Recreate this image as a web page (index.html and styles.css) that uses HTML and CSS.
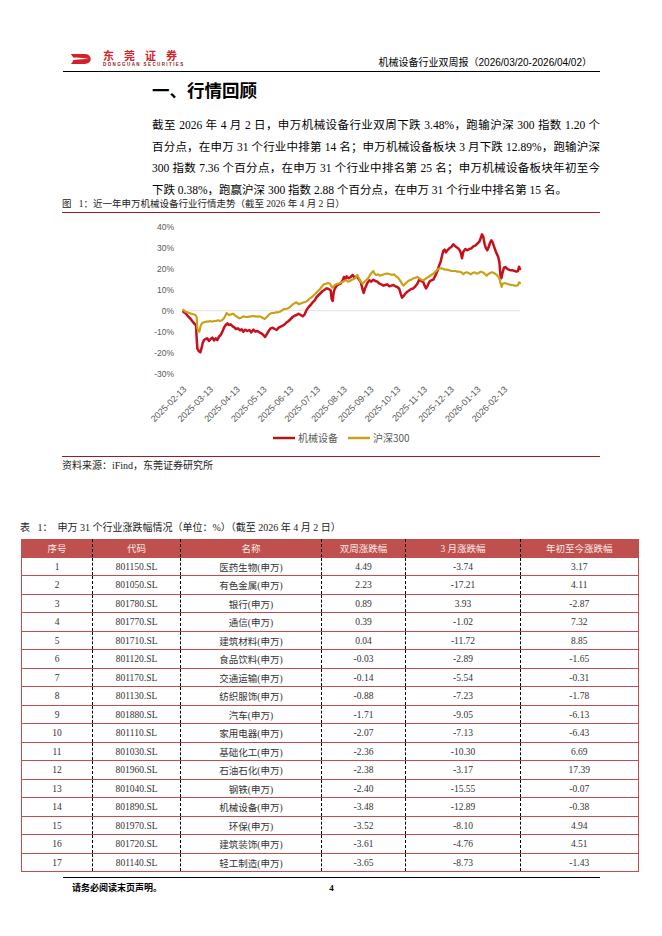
FILE: index.html
```html
<!DOCTYPE html>
<html lang="zh-CN">
<head>
<meta charset="utf-8">
<title>机械设备行业双周报</title>
<link rel="stylesheet" href="styles.css">
</head>
<body>
<div class="page">
  <header class="hdr">
    <div class="logo">
      <svg class="logo-mark" viewBox="0 0 26 13">
        <path d="M1 1 H16 A6.5 5.5 0 0 1 16 12 H1 Q6 6.5 1 1Z" fill="#d42027"/>
        <path d="M0 5.2 Q11 4.2 21 6.6 Q11 6.2 0 8.2Z" fill="#fff"/>
      </svg>
      <div class="logo-words">
        <div class="logo-cn">东莞证券</div>
        <div class="logo-en">DONGGUAN SECURITIES</div>
      </div>
    </div>
    <div class="hdr-title">机械设备行业双周报（2026/03/20-2026/04/02）</div>
  </header>

  <h1 class="sec-title">一、行情回顾</h1>

  <p class="para">
    <span class="ln">截至 2026 年 4 月 2 日，申万机械设备行业双周下跌 3.48%，跑输沪深 300 指数 1.20 个</span>
    <span class="ln">百分点，在申万 31 个行业中排第 14 名；申万机械设备板块 3 月下跌 12.89%，跑输沪深</span>
    <span class="ln">300 指数 7.36 个百分点，在申万 31 个行业中排名第 25 名；申万机械设备板块年初至今</span>
    <span class="ln-last">下跌 0.38%，跑赢沪深 300 指数 2.88 个百分点，在申万 31 个行业中排名第 15 名。</span>
  </p>

  <div class="fig-cap">图&nbsp;&nbsp;&nbsp;1：近一年申万机械设备行业行情走势（截至 2026 年 4 月 2 日）</div>

  <svg class="chart" viewBox="62 213 538 243">
    <line class="zero" x1="183" y1="310.7" x2="520" y2="310.7"/>
    <text class="ylab" x="174" y="229.7">40%</text>
    <text class="ylab" x="174" y="250.7">30%</text>
    <text class="ylab" x="174" y="271.7">20%</text>
    <text class="ylab" x="174" y="292.7">10%</text>
    <text class="ylab" x="174" y="313.7">0%</text>
    <text class="ylab" x="174" y="334.7">-10%</text>
    <text class="ylab" x="174" y="355.7">-20%</text>
    <text class="ylab" x="174" y="376.7">-30%</text>
    <g transform="translate(140 215) scale(0.33333)">
      <polyline class="s-red" points="130,290 138,296 145,305 152,312 158,320 163,326 168,330 170,370 172,400 176,408 181,412 185,398 188,385 192,375 197,372 202,370 207,378 212,372 217,368 222,376 227,370 232,375 237,365 242,360 247,350 252,338 257,330 262,325 266,330 272,328 278,334 283,337 288,342 294,340 300,346 305,343 310,350 316,344 322,348 328,345 334,352 340,344 346,350 352,348 358,352 364,355 370,360 375,366 380,358 386,348 392,340 398,338 404,342 410,345 416,338 422,335 428,332 434,328 440,322 446,318 452,312 458,306 464,302 470,300 476,296 482,300 488,304 494,298 500,284 506,276 512,270 518,262 524,256 530,246 536,240 542,234 548,228 554,224 560,220 566,222 572,226 575,252 578,258 581,232 584,222 590,212 596,208 602,206 608,196 612,186 616,192 620,184 626,190 632,186 638,180 644,188 650,184 656,192 662,200 668,224 671,234 676,218 682,204 688,196 694,200 700,194 706,198 712,200 718,206 724,208 730,212 736,210 742,208 748,214 754,212 760,210 766,214 772,216 778,222 782,236 786,248 790,244 796,236 802,230 808,226 814,222 820,220 826,214 832,206 838,194 844,198 850,202 854,212 858,220 862,214 868,200 874,196 880,194 886,182 892,168 898,150 902,140 906,122 910,108 914,104 918,112 922,106 928,100 934,96 940,88 946,94 952,98 958,104 962,112 966,130 970,110 976,102 982,106 988,102 994,100 1000,94 1006,92 1012,86 1018,80 1022,70 1026,58 1030,66 1034,88 1038,100 1042,106 1046,96 1050,84 1054,76 1058,82 1062,94 1066,106 1070,116 1074,124 1078,140 1081,178 1084,190 1088,172 1092,158 1096,156 1100,160 1106,164 1112,166 1118,166 1124,168 1130,170 1134,168 1137,155 1140,162"/>
      <polyline class="s-gold" points="130,284 136,290 142,292 148,294 154,296 160,298 166,300 170,306 172,340 175,348 178,350 182,332 186,325 192,322 198,320 204,320 210,318 216,320 222,318 228,318 234,316 240,318 246,316 252,310 256,302 260,294 264,298 268,300 274,298 280,296 286,302 292,306 298,310 304,308 310,304 316,306 322,306 328,305 334,304 340,303 346,304 352,305 358,304 364,306 370,310 374,312 378,308 384,302 390,296 396,294 402,294 408,292 414,292 420,290 426,286 432,282 438,282 444,280 450,276 456,270 462,266 468,262 472,264 476,268 480,266 486,264 492,262 498,260 504,256 510,250 516,246 522,240 528,234 534,228 540,222 546,214 552,208 558,206 564,204 570,206 574,214 578,218 582,212 588,208 594,206 600,204 606,202 612,198 618,196 624,200 630,198 636,194 642,192 648,186 652,180 656,188 660,196 664,202 668,206 672,202 678,196 684,190 690,180 696,172 700,168 704,176 708,180 714,178 720,182 726,180 732,178 738,176 744,176 750,178 756,180 762,178 768,184 774,188 780,196 786,206 790,212 796,206 802,200 808,196 814,194 820,190 826,188 832,186 838,190 844,194 850,196 856,192 862,188 868,184 874,180 880,176 886,170 892,164 898,160 904,160 910,162 916,164 922,164 928,166 934,168 940,168 946,168 952,170 958,170 964,172 970,178 974,174 980,172 986,174 992,178 998,174 1004,172 1010,176 1016,174 1022,170 1028,172 1034,176 1040,182 1044,178 1050,174 1056,172 1062,174 1068,178 1074,184 1078,190 1082,206 1085,216 1088,206 1094,204 1100,206 1106,208 1112,210 1118,210 1124,212 1130,212 1134,210 1137,202 1140,204"/>
    </g>
    <text class="xlab" transform="translate(187 390) rotate(-45)">2025-02-13</text>
    <text class="xlab" transform="translate(213.75 390) rotate(-45)">2025-03-13</text>
    <text class="xlab" transform="translate(240.5 390) rotate(-45)">2025-04-13</text>
    <text class="xlab" transform="translate(267.25 390) rotate(-45)">2025-05-13</text>
    <text class="xlab" transform="translate(294 390) rotate(-45)">2025-06-13</text>
    <text class="xlab" transform="translate(320.75 390) rotate(-45)">2025-07-13</text>
    <text class="xlab" transform="translate(347.5 390) rotate(-45)">2025-08-13</text>
    <text class="xlab" transform="translate(374.25 390) rotate(-45)">2025-09-13</text>
    <text class="xlab" transform="translate(401 390) rotate(-45)">2025-10-13</text>
    <text class="xlab" transform="translate(427.75 390) rotate(-45)">2025-11-13</text>
    <text class="xlab" transform="translate(454.5 390) rotate(-45)">2025-12-13</text>
    <text class="xlab" transform="translate(481.25 390) rotate(-45)">2026-01-13</text>
    <text class="xlab" transform="translate(508 390) rotate(-45)">2026-02-13</text>
    <line class="lg-red" x1="273" y1="438" x2="295" y2="438"/>
    <text class="lg" x="298" y="441.5">机械设备</text>
    <line class="lg-gold" x1="348" y1="438" x2="370" y2="438"/>
    <text class="lg" x="373" y="441.5">沪深300</text>
  </svg>

  <div class="src">资料来源：iFind，东莞证券研究所</div>

  <div class="tbl-cap">表&nbsp;&nbsp;&nbsp;1：&nbsp;&nbsp;申万 31 个行业涨跌幅情况（单位：%）（截至 2026 年 4 月 2 日）</div>

  <table class="tbl">
    <colgroup>
      <col class="c1"><col class="c2"><col class="c3"><col class="c4"><col class="c5"><col class="c6">
    </colgroup>
    <thead>
      <tr><th>序号</th><th>代码</th><th>名称</th><th>双周涨跌幅</th><th>3 月涨跌幅</th><th>年初至今涨跌幅</th></tr>
    </thead>
    <tbody>
      <tr><td>1</td><td>801150.SL</td><td>医药生物(申万)</td><td>4.49</td><td>-3.74</td><td>3.17</td></tr>
      <tr><td>2</td><td>801050.SL</td><td>有色金属(申万)</td><td>2.23</td><td>-17.21</td><td>4.11</td></tr>
      <tr><td>3</td><td>801780.SL</td><td>银行(申万)</td><td>0.89</td><td>3.93</td><td>-2.87</td></tr>
      <tr><td>4</td><td>801770.SL</td><td>通信(申万)</td><td>0.39</td><td>-1.02</td><td>7.32</td></tr>
      <tr><td>5</td><td>801710.SL</td><td>建筑材料(申万)</td><td>0.04</td><td>-11.72</td><td>8.85</td></tr>
      <tr><td>6</td><td>801120.SL</td><td>食品饮料(申万)</td><td>-0.03</td><td>-2.89</td><td>-1.65</td></tr>
      <tr><td>7</td><td>801170.SL</td><td>交通运输(申万)</td><td>-0.14</td><td>-5.54</td><td>-0.31</td></tr>
      <tr><td>8</td><td>801130.SL</td><td>纺织服饰(申万)</td><td>-0.88</td><td>-7.23</td><td>-1.78</td></tr>
      <tr><td>9</td><td>801880.SL</td><td>汽车(申万)</td><td>-1.71</td><td>-9.05</td><td>-6.13</td></tr>
      <tr><td>10</td><td>801110.SL</td><td>家用电器(申万)</td><td>-2.07</td><td>-7.13</td><td>-6.43</td></tr>
      <tr><td>11</td><td>801030.SL</td><td>基础化工(申万)</td><td>-2.36</td><td>-10.30</td><td>6.69</td></tr>
      <tr><td>12</td><td>801960.SL</td><td>石油石化(申万)</td><td>-2.38</td><td>-3.17</td><td>17.39</td></tr>
      <tr><td>13</td><td>801040.SL</td><td>钢铁(申万)</td><td>-2.40</td><td>-15.55</td><td>-0.07</td></tr>
      <tr><td>14</td><td>801890.SL</td><td>机械设备(申万)</td><td>-3.48</td><td>-12.89</td><td>-0.38</td></tr>
      <tr><td>15</td><td>801970.SL</td><td>环保(申万)</td><td>-3.52</td><td>-8.10</td><td>4.94</td></tr>
      <tr><td>16</td><td>801720.SL</td><td>建筑装饰(申万)</td><td>-3.61</td><td>-4.76</td><td>4.51</td></tr>
      <tr><td>17</td><td>801140.SL</td><td>轻工制造(申万)</td><td>-3.65</td><td>-8.73</td><td>-1.43</td></tr>
    </tbody>
  </table>

  <footer class="ftr">
    <span class="ftr-note">请务必阅读末页声明。</span>
    <span class="pno">4</span>
    <span></span>
  </footer>
</div>
</body>
</html>
```

FILE: styles.css
```css
html, body {
  margin: 0;
  padding: 0;
  background: #fff;
}
body {
  font-family: "Liberation Serif", "Noto Sans CJK SC", serif;
  color: #000;
}
.page {
  width: 662px;
}

/* header */
.hdr {
  display: flex;
  justify-content: space-between;
  align-items: flex-end;
  margin: 0 62px 0 63px;
  padding-top: 48px;
  height: 23px;
  border-bottom: 1.5px solid #000;
}
.logo {
  display: flex;
  align-items: center;
  gap: 9px;
  padding-left: 7px;
  padding-bottom: 4px;
}
.logo-mark {
  width: 24px;
  height: 12px;
  display: block;
}
.logo-words {
  display: flex;
  flex-direction: column;
  gap: 1px;
}
.logo-cn {
  font-family: "Noto Sans CJK SC", sans-serif;
  font-weight: 700;
  font-size: 11px;
  line-height: 11px;
  letter-spacing: 10px;
  color: #d4232a;
}
.logo-en {
  font-family: "Liberation Sans", sans-serif;
  font-weight: 700;
  font-size: 4.5px;
  line-height: 5px;
  letter-spacing: 1.4px;
  color: #8a1a1a;
}
.hdr-title {
  font-family: "Liberation Sans", "Noto Sans CJK SC", sans-serif;
  font-size: 10px;
  line-height: 12px;
  padding-right: 8px;
  padding-bottom: 2px;
}

/* title + paragraph */
.sec-title {
  margin: 6px 0 0 152px;
  font-family: "Noto Sans CJK SC", sans-serif;
  font-size: 17.5px;
  line-height: 24px;
  font-weight: 700;
}
.para {
  margin: 13px 62px 0 152px;
  font-size: 11.5px;
  line-height: 21.7px;
}
.ln {
  display: block;
  white-space: nowrap;
  text-align: justify;
  text-align-last: justify;
}
.ln-last {
  display: block;
  white-space: nowrap;
}

/* figure */
.fig-cap {
  margin: -3px 62px 0 62px;
  font-size: 9.5px;
  line-height: 10px;
  padding-bottom: 3px;
  color: #222;
  border-bottom: 1.2px solid #9b1c1c;
}
.chart {
  display: block;
  margin-left: 62px;
  width: 538px;
  height: 243px;
}
.zero {
  stroke: #d9d9d9;
  stroke-width: 0.8;
}
.ylab {
  font-family: "Liberation Sans", sans-serif;
  font-size: 8.5px;
  fill: #595959;
  text-anchor: end;
}
.xlab {
  font-family: "Liberation Sans", sans-serif;
  font-size: 9px;
  fill: #595959;
  text-anchor: end;
}
.s-red {
  fill: none;
  stroke: #c8101c;
  stroke-width: 7.5;
  stroke-linejoin: round;
  stroke-linecap: round;
}
.s-gold {
  fill: none;
  stroke: #c9a016;
  stroke-width: 6.5;
  stroke-linejoin: round;
  stroke-linecap: round;
}
.lg-red {
  stroke: #b01818;
  stroke-width: 2.5;
}
.lg-gold {
  stroke: #c9a016;
  stroke-width: 2.5;
}
.lg {
  font-family: "Noto Sans CJK SC", sans-serif;
  font-size: 10px;
  fill: #595959;
}

.src {
  margin: 0 62px;
  border-top: 1.2px solid #9b1c1c;
  padding-top: 3px;
  font-size: 10px;
  line-height: 12px;
  color: #222;
}

/* table */
.tbl-cap {
  margin: 50px 0 0 20px;
  font-size: 10px;
  line-height: 12px;
  color: #222;
}
.tbl {
  margin: 5px 0 0 21px;
  border-collapse: collapse;
  table-layout: fixed;
  width: 616.5px;
  font-size: 9.5px;
  color: #333;
}
.c1 { width: 71px; }
.c2 { width: 88px; }
.c3 { width: 141px; }
.c4 { width: 84px; }
.c5 { width: 115px; }
.c6 { width: 117.5px; }
.tbl th {
  background: #c0504d;
  color: #fbeaea;
  font-weight: normal;
  height: 18px;
  padding: 0;
  border-bottom: 1px solid #c0504d;
}
.tbl td {
  height: 17.5px;
  padding: 0;
  text-align: center;
  border-bottom: 1px solid #c0504d;
}
.tbl th + th,
.tbl td + td {
  border-left: 1px dashed #000;
}
.tbl th:first-child,
.tbl td:first-child {
  border-left: 1px solid #c0504d;
}
.tbl th:last-child,
.tbl td:last-child {
  border-right: 1px solid #c0504d;
}

/* footer */
.ftr {
  display: grid;
  grid-template-columns: 1fr auto 1fr;
  margin: 5px 62px 0 63px;
  border-top: 1px solid #000;
  padding-top: 4px;
  font-size: 9px;
  line-height: 12px;
  font-weight: 700;
}
.ftr-note {
  padding-left: 9px;
  font-family: "Noto Sans CJK SC", sans-serif;
}
.pno {
  font-family: "Liberation Serif", serif;
}
```
